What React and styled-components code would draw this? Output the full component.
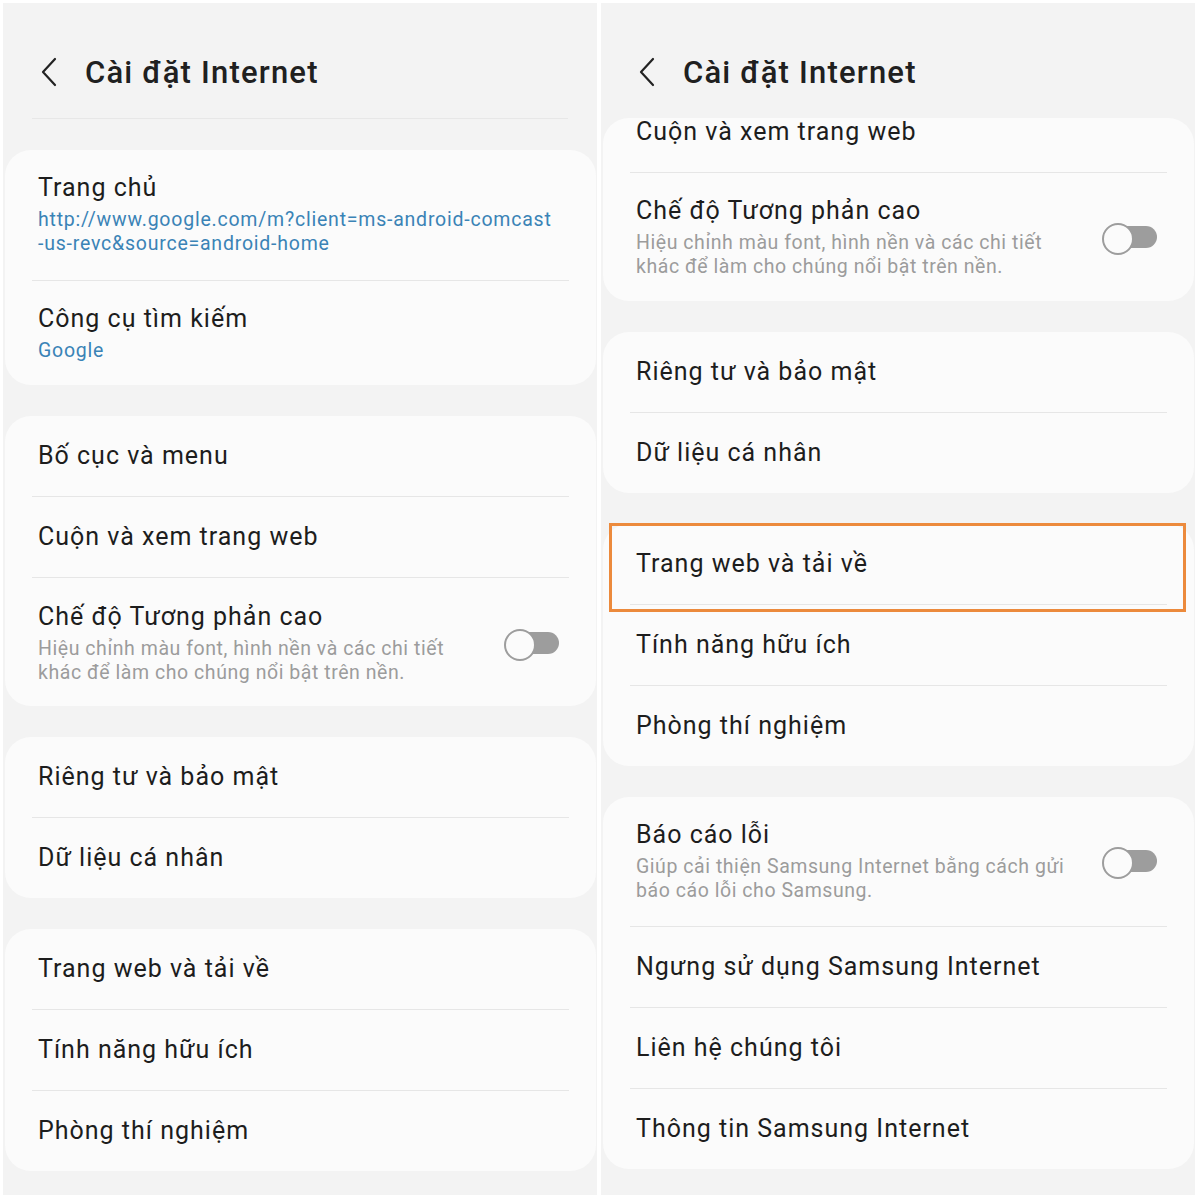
import React from "react";
import styled, { createGlobalStyle } from "styled-components";

const Global = createGlobalStyle`
  html, body { margin: 0; padding: 0; background: #ffffff; }
  body { font-family: Roboto, "Noto Sans", "Liberation Sans", sans-serif; -webkit-font-smoothing: antialiased; }
  * { box-sizing: border-box; }
`;

const Page = styled.div`
  display: flex;
  gap: 4px;
  padding: 3px;
  width: 1200px;
  height: 1200px;
  background: #ffffff;
`;

const Panel = styled.div`
  width: 594px;
  height: 1192px;
  background: #f3f3f3;
  overflow: hidden;
  display: flex;
  flex-direction: column;
`;

const Header = styled.div`
  height: 115px;
  display: flex;
  align-items: center;
  padding-left: 37px;
  padding-top: 23px;
  flex-shrink: 0;
`;

const Back = styled.svg`
  width: 18px;
  height: 30px;
  margin-right: 27px;
`;

const Title = styled.h1`
  margin: 0;
  font-size: 31px;
  font-weight: 500;
  color: #202020;
  letter-spacing: 1.2px;
`;

const HeaderRule = styled.div`
  height: 1px;
  margin: 0 29px 31px 29px;
  background: #e7e7e7;
  flex-shrink: 0;
`;

const List = styled.div`
  display: flex;
  flex-direction: column;
  gap: 31px;
  padding: 0 1px 0 2px;
`;

const Card = styled.div`
  background: #fbfbfb;
  border-radius: 26px;
  padding: 0 27px;
  display: flex;
  flex-direction: column;
`;

const Row = styled.div`
  position: relative;
  box-sizing: content-box;
  display: flex;
  align-items: ${(p) => (p.$clipped ? "flex-start" : "center")};
  min-height: ${(p) => (p.$clipped || p.$tall ? 0 : 80)}px;
  padding: ${(p) =>
    p.$clipped
      ? "0 10px 26px 6px"
      : p.$tall
      ? `${p.$pt ?? 22}px 10px ${p.$pb ?? 22}px 6px`
      : "0 10px 0 6px"};
  & + & {
    border-top: 1px solid #e6e6e6;
  }
`;

const Texts = styled.div`
  flex: 1;
  display: flex;
  flex-direction: column;
  gap: 4px;
`;

const Label = styled.div`
  font-size: 25px;
  line-height: ${(p) => (p.$clipped ? 28 : 32)}px;
  color: #1d1d1d;
  letter-spacing: 1px;
`;

const Sub = styled.div`
  font-size: 19.5px;
  line-height: 24px;
  color: ${(p) => (p.$link ? "#3a83b6" : "#9c9c9c")};
  letter-spacing: ${(p) => (p.$link ? "0.78px" : "0.55px")};
  max-width: ${(p) => (p.$narrow ? "430px" : "none")};
`;

const Toggle = styled.div`
  position: relative;
  width: 55px;
  height: 30px;
  flex-shrink: 0;
  margin-left: 20px;
  &::before {
    content: "";
    position: absolute;
    left: 6px;
    right: 0;
    top: 4px;
    height: 22px;
    border-radius: 11px;
    background: #9d9d9d;
  }
  &::after {
    content: "";
    position: absolute;
    left: 0;
    top: 1px;
    width: 28px;
    height: 28px;
    border-radius: 50%;
    background: #fbfbfb;
    border: 2.5px solid #9d9d9d;
  }
`;

const Highlight = styled.div`
  position: absolute;
  top: -1px;
  left: -21px;
  right: -19px;
  bottom: -8px;
  border: 3px solid #ec8a3c;
  pointer-events: none;
`;

const Chevron = () => (
  <Back viewBox="0 0 18 30">
    <path d="M15 2 L3 15 L15 28" fill="none" stroke="#222" strokeWidth="2.2" strokeLinecap="round" strokeLinejoin="round" />
  </Back>
);

const Item = ({ label, sub, link, toggle, clipped, narrow, pt, pb, highlight }) => (
  <Row $clipped={clipped} $tall={!!sub} $pt={pt} $pb={pb}>
    {highlight && <Highlight />}
    <Texts>
      <Label $clipped={clipped}>{label}</Label>
      {sub && (
        <Sub $link={link} $narrow={narrow}>
          {sub}
        </Sub>
      )}
    </Texts>
    {toggle && <Toggle />}
  </Row>
);

const contrastSub = "Hiệu chỉnh màu font, hình nền và các chi tiết khác để làm cho chúng nổi bật trên nền.";
const homeUrl = (
  <>
    http://www.google.com/m?client=ms-android-comcast
    <br />
    -us-revc&amp;source=android-home
  </>
);

export default function App() {
  return (
    <>
      <Global />
      <Page>
        <Panel>
          <Header>
            <Chevron />
            <Title>Cài đặt Internet</Title>
          </Header>
          <HeaderRule />
          <List>
            <Card>
              <Item label="Trang chủ" sub={homeUrl} link pt={22} pb={24} />
              <Item label="Công cụ tìm kiếm" sub="Google" link pt={22} pb={22} />
            </Card>
            <Card>
              <Item label="Bố cục và menu" />
              <Item label="Cuộn và xem trang web" />
              <Item label="Chế độ Tương phản cao" sub={contrastSub} toggle narrow pt={23} pb={21} />
            </Card>
            <Card>
              <Item label="Riêng tư và bảo mật" />
              <Item label="Dữ liệu cá nhân" />
            </Card>
            <Card>
              <Item label="Trang web và tải về" />
              <Item label="Tính năng hữu ích" />
              <Item label="Phòng thí nghiệm" />
            </Card>
          </List>
        </Panel>
        <Panel>
          <Header>
            <Chevron />
            <Title>Cài đặt Internet</Title>
          </Header>
          <List>
            <Card>
              <Item label="Cuộn và xem trang web" clipped />
              <Item label="Chế độ Tương phản cao" sub={contrastSub} toggle narrow pt={22} pb={22} />
            </Card>
            <Card>
              <Item label="Riêng tư và bảo mật" />
              <Item label="Dữ liệu cá nhân" />
            </Card>
            <Card>
              <Item label="Trang web và tải về" highlight />
              <Item label="Tính năng hữu ích" />
              <Item label="Phòng thí nghiệm" />
            </Card>
            <Card>
              <Item
                label="Báo cáo lỗi"
                sub="Giúp cải thiện Samsung Internet bằng cách gửi báo cáo lỗi cho Samsung."
                toggle
                pt={22}
                pb={23}
              />
              <Item label="Ngưng sử dụng Samsung Internet" />
              <Item label="Liên hệ chúng tôi" />
              <Item label="Thông tin Samsung Internet" />
            </Card>
          </List>
        </Panel>
      </Page>
    </>
  );
}
